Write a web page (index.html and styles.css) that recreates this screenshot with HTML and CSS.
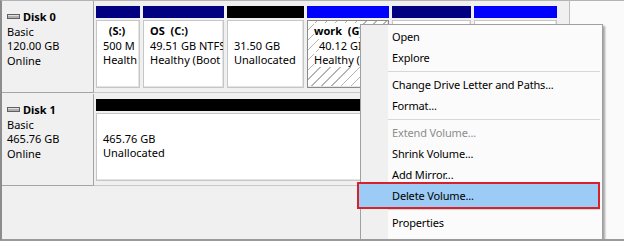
FILE: index.html
```html
<!DOCTYPE html>
<html>
<head>
<meta charset="utf-8">
<link rel="stylesheet" href="styles.css">
</head>
<body>
<div class="window">
  <div class="disks">
    <div class="disk">
      <div class="disk-label">
        <div class="disk-name"><svg class="drive" width="13" height="5" viewBox="0 0 13 5"><rect x="0.5" y="0.5" width="12" height="4" fill="#b0b0b0" stroke="#606060"/><rect x="1" y="1" width="11" height="1" fill="#e0e0e0"/></svg>Disk 0</div>
        <div>Basic</div>
        <div>120.00 GB</div>
        <div>Online</div>
      </div>
      <div class="parts">
        <div class="part" style="width:44px">
          <div class="bar navy"></div>
          <div class="pbody">
            <div class="vname">&nbsp;&nbsp;(S:)</div>
            <div>500 M</div>
            <div>Health</div>
          </div>
        </div>
        <div class="part" style="width:81px">
          <div class="bar navy"></div>
          <div class="pbody">
            <div class="vname">OS&nbsp; (C:)</div>
            <div>49.51 GB NTFS</div>
            <div>Healthy (Boot</div>
          </div>
        </div>
        <div class="part" style="width:77px">
          <div class="bar black"></div>
          <div class="pbody">
            <div>&nbsp;</div>
            <div>31.50 GB</div>
            <div>Unallocated</div>
          </div>
        </div>
        <div class="part" style="width:82px">
          <div class="bar blue"></div>
          <div class="pbody selected-vol">
            <div><span class="vname">work&nbsp; (G</span></div>
            <div class="indent"><span>40.12 GI</span></div>
            <div><span>Healthy (</span></div>
          </div>
        </div>
        <div class="part" style="width:79px">
          <div class="bar navy"></div>
          <div class="pbody"></div>
        </div>
        <div class="part" style="width:83px">
          <div class="bar blue"></div>
          <div class="pbody"></div>
        </div>
      </div>
    </div>
    <div class="disk">
      <div class="disk-label">
        <div class="disk-name"><svg class="drive" width="13" height="5" viewBox="0 0 13 5"><rect x="0.5" y="0.5" width="12" height="4" fill="#b0b0b0" stroke="#606060"/><rect x="1" y="1" width="11" height="1" fill="#e0e0e0"/></svg>Disk 1</div>
        <div>Basic</div>
        <div>465.76 GB</div>
        <div>Online</div>
      </div>
      <div class="parts">
        <div class="part" style="width:461px">
          <div class="bar black"></div>
          <div class="pbody">
            <div>&nbsp;</div>
            <div>465.76 GB</div>
            <div>Unallocated</div>
          </div>
        </div>
      </div>
    </div>
  </div>
  <div class="side"></div>

  <div class="menu">
    <div class="item">Open</div>
    <div class="item">Explore</div>
    <div class="sep"></div>
    <div class="item">Change Drive Letter and Paths...</div>
    <div class="item">Format...</div>
    <div class="sep"></div>
    <div class="item disabled">Extend Volume...</div>
    <div class="item">Shrink Volume...</div>
    <div class="item">Add Mirror...</div>
    <div class="item active">Delete Volume...</div>
    <div class="sep"></div>
    <div class="item">Properties</div>
  </div>
</div>
</body>
</html>
```

FILE: styles.css
```css
* { box-sizing: content-box; }
html, body { margin: 0; padding: 0; }
body {
  width: 624px;
  height: 241px;
  overflow: hidden;
  background: #fafafa;
}
.window {
  position: relative;
  width: 622px;
  height: 238px;
  border-left: 2px solid #8c8c8c;
  border-top: 1px solid #b4b4b4;
  border-bottom: 2px solid #9a9a9a;
  display: flex;
  overflow: hidden;
  background: #fafafa;
  font-family: "Noto Sans", sans-serif;
  font-size: 11px;
  line-height: 14.5px;
  color: #000;
}
.disks {
  width: 567px;
  background: #f0f0f0;
  border-right: 1px solid #bdbdbd;
}
.side { flex: 1; background: #fafafa; }
.disk {
  display: flex;
  height: 92px;
  margin-bottom: 1px;
}
.disk-label {
  width: 86px;
  padding: 9px 0 0 5px;
  border-right: 1px solid #a5a5a5;
  border-bottom: 1px solid #a5a5a5;
  background: #f0f0f0;
  white-space: nowrap;
}
.disk-name { font-weight: bold; }
.drive { margin-right: 3px; vertical-align: 2px; }
.parts {
  flex: 1;
  display: flex;
  gap: 3px;
  padding: 5px 0 0 2px;
  border-bottom: 1px solid #c9c9c9;
  overflow: hidden;
}
.part {
  display: flex;
  flex-direction: column;
  flex: none;
}
.bar { height: 12px; }
.navy { background: #000080; }
.black { background: #000; }
.blue { background: #0000ff; }
.pbody {
  margin-top: 2px;
  height: 63px;
  padding: 3px 0 0 6px;
  border: 1px solid #c6c6c6;
  box-shadow: inset -1px -1px 0 #e4e4e4;
  background: #fff;
  overflow: hidden;
  white-space: nowrap;
}
.vname { font-weight: bold; }
.selected-vol {
  border-color: #8a8a8a;
  padding-left: 6px;
  background: repeating-linear-gradient(135deg, #fff 0 6px, #b4b4b4 6px 7px);
}
.selected-vol span { background: #fff; }
.indent { padding-left: 5px; }

.menu {
  position: absolute;
  left: 358px;
  top: 23px;
  width: 241px;
  height: 220px;
  border: 1px solid #a0a0a0;
  padding-top: 1px;
  background: linear-gradient(to right, #f0f0f0 0 27px, #fbfbfb 27px);
  box-shadow: 2px 2px 2px rgba(0, 0, 0, 0.35);
  font-size: 11px;
  letter-spacing: -0.15px;
}
.item {
  height: 21px;
  line-height: 21px;
  padding-left: 31px;
  white-space: nowrap;
}
.disabled { color: #8d8d8d; }
.active {
  position: relative;
  margin: -3px 2px -3px -4px;
  height: 23px;
  line-height: 23px;
  padding-left: 33px;
  border: 2px solid #d8222b;
  background: #9ccbf5;
}
.sep {
  height: 1px;
  background: #d7d7d7;
  margin: 3px 2px 2px 27px;
}
```
